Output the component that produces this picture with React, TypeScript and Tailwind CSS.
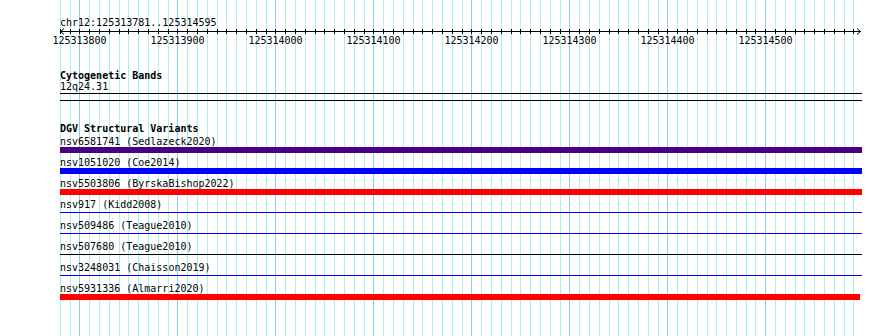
import React from "react";

const PX_PER_BP = 0.98;
const ORIGIN = 79.3; // page x of 125313800

type Variant = { id: string; study: string; color: string; thick: boolean; short?: boolean };

const variants: Variant[] = [
  { id: "nsv6581741", study: "Sedlazeck2020", color: "#4b0082", thick: true },
  { id: "nsv1051020", study: "Coe2014", color: "#0000ff", thick: true },
  { id: "nsv5503806", study: "ByrskaBishop2022", color: "#ff0000", thick: true },
  { id: "nsv917", study: "Kidd2008", color: "#0000ff", thick: false },
  { id: "nsv509486", study: "Teague2010", color: "#0000ff", thick: false },
  { id: "nsv507680", study: "Teague2010", color: "#000000", thick: false },
  { id: "nsv3248031", study: "Chaisson2019", color: "#0000ff", thick: false },
  { id: "nsv5931336", study: "Almarri2020", color: "#ff0000", thick: true, short: true },
];

// grid / tick positions every 10bp, from k=-2 to 79
const ticks = Array.from({ length: 82 }, (_, i) => {
  const k = i - 2;
  return { k, x: Math.round(ORIGIN + k * 10 * PX_PER_BP) };
});

function Grid() {
  return (
    <svg className="absolute inset-0" width={890} height={336} shapeRendering="crispEdges">
      {ticks.map((t) => (
        <line
          key={t.k}
          x1={t.x + 0.5}
          x2={t.x + 0.5}
          y1={0}
          y2={336}
          stroke={t.k % 10 === 0 && t.k >= 0 ? "#87cefa" : "#afeeee"}
          strokeWidth={1}
        />
      ))}
    </svg>
  );
}

function Ruler() {
  // svg origin is page x=60, page y=28
  return (
    <svg width={802} height={19} className="block overflow-visible">
      <g shapeRendering="crispEdges" stroke="#000">
        <line x1={0} x2={801} y1={3.5} y2={3.5} />
        {ticks.map((t) => (
          <line key={t.k} x1={t.x - 60 + 0.5} x2={t.x - 60 + 0.5} y1={1} y2={6} />
        ))}
      </g>
      <polyline points="4,0.5 0.5,3.5 4,6.5" fill="none" stroke="#000" strokeWidth={1} />
      <polyline points="797,0.5 800.5,3.5 797,6.5" fill="none" stroke="#000" strokeWidth={1} />
      {ticks
        .filter((t) => t.k % 10 === 0 && t.k >= 0)
        .map((t) => (
          <text
            key={t.k}
            x={t.x - 60 + 0.5}
            y={16}
            textAnchor="middle"
            fontSize={10}
            fontFamily="'DejaVu Sans Mono', monospace"
            fill="#000"
          >
            {125313800 + t.k * 10}
          </text>
        ))}
    </svg>
  );
}

function VariantRow({ v }: { v: Variant }) {
  return (
    <div className="mb-[4px]">
      <div className="h-[11px] leading-[11px] whitespace-pre">
        {v.id} ({v.study})
      </div>
      <div className="h-[6px] flex flex-col">
        {v.thick ? (
          <div className={v.short ? "h-[6px] w-[800px]" : "h-[6px] w-[802px]"} style={{ backgroundColor: v.color }} />
        ) : (
          <div className="mt-[2px] h-[1px] w-[802px]" style={{ backgroundColor: v.color }} />
        )}
      </div>
    </div>
  );
}

export default function App() {
  return (
    <div className="relative w-[890px] h-[336px] overflow-hidden bg-white text-black font-['DejaVu_Sans_Mono',monospace] text-[10px]">
      <Grid />
      <div className="relative pl-[60px] pt-[17px]">
        <div className="h-[11px] leading-[11px]">chr12:125313781..125314595</div>
        <Ruler />

        <div className="mt-[23px] h-[11px] leading-[11px] font-bold">Cytogenetic Bands</div>
        <div className="h-[11px] leading-[11px]">12q24.31</div>
        <div className="mt-[1px] w-[802px] border-t border-black" />
        <div className="mt-[6px] w-[802px] border-t border-black" />

        <div className="mt-[22px] h-[11px] leading-[11px] font-bold">DGV Structural Variants</div>
        <div className="mt-[2px] flex flex-col">
          {variants.map((v) => (
            <VariantRow key={v.id} v={v} />
          ))}
        </div>
      </div>
    </div>
  );
}
